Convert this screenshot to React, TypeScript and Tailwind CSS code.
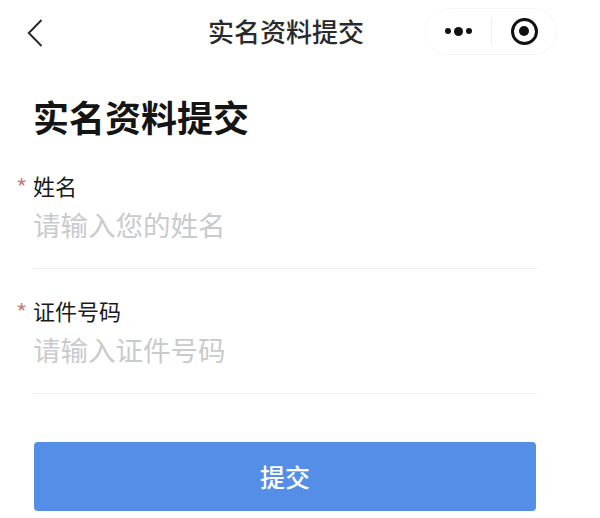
const fields = [
  { label: "姓名", placeholder: "请输入您的姓名", top: "mt-[29px]" },
  { label: "证件号码", placeholder: "请输入证件号码", top: "mt-[26px]" },
];

function Field({ label, placeholder, top }: { label: string; placeholder: string; top: string }) {
  return (
    <div className={`relative ${top}`}>
      <span className="absolute left-[-18px] top-[2px] text-[24px] leading-[30px] text-[#c4837c]">*</span>
      <div className="text-[22px] leading-[30px] text-[#1a1a1a] -ml-px">{label}</div>
      <div className="mt-[6px] text-[27.5px] leading-[36px] text-[#c9cbcd] -ml-px">{placeholder}</div>
      <div className="mt-[26px] h-px bg-[#efefef] w-[504px] -ml-px" />
    </div>
  );
}

export default function App() {
  return (
    <div className="w-[600px] h-[518px] bg-white overflow-hidden flex flex-col font-['Noto_Sans_CJK_SC',sans-serif]">
      <div className="h-[62px] flex items-center pl-[27px] pr-[43px]">
        <svg width="16" height="30" viewBox="0 0 16 30" fill="none" stroke="#2b2b2b" strokeWidth="2" className="shrink-0 mt-[4px]">
          <path d="M14.5 2 L1.8 15 L14.5 28" />
        </svg>
        <div className="ml-[165px] text-[26px] leading-[36px] font-medium text-[#2a2a2a] whitespace-nowrap">实名资料提交</div>
        <div className="ml-auto w-[132px] h-[47px] rounded-full border border-[#f6f6f6] flex items-center shrink-0">
          <div className="w-[65px] flex justify-center items-center gap-[3px]">
            <span className="w-[6px] h-[6px] rounded-full bg-[#111]" />
            <span className="w-[9px] h-[9px] rounded-full bg-[#111]" />
            <span className="w-[6px] h-[6px] rounded-full bg-[#111]" />
          </div>
          <div className="w-px h-[27px] bg-[#efefef]" />
          <div className="flex-1 flex justify-center">
            <div className="w-[27px] h-[27px] rounded-full border-[3px] border-[#111] flex items-center justify-center">
              <span className="w-[10px] h-[10px] rounded-full bg-[#111]" />
            </div>
          </div>
        </div>
      </div>
      <div className="px-[34px] pt-[29px]">
        <div className="text-[36px] font-bold text-[#151515] leading-[50px] whitespace-nowrap -ml-px">实名资料提交</div>
        <Field {...fields[0]} />
        <Field {...fields[1]} />
        <button className="mt-[48px] w-[502px] h-[69px] rounded-[4px] bg-[#558ee6] text-white text-[25px] font-medium flex items-center justify-center">
          提交
        </button>
      </div>
    </div>
  );
}
